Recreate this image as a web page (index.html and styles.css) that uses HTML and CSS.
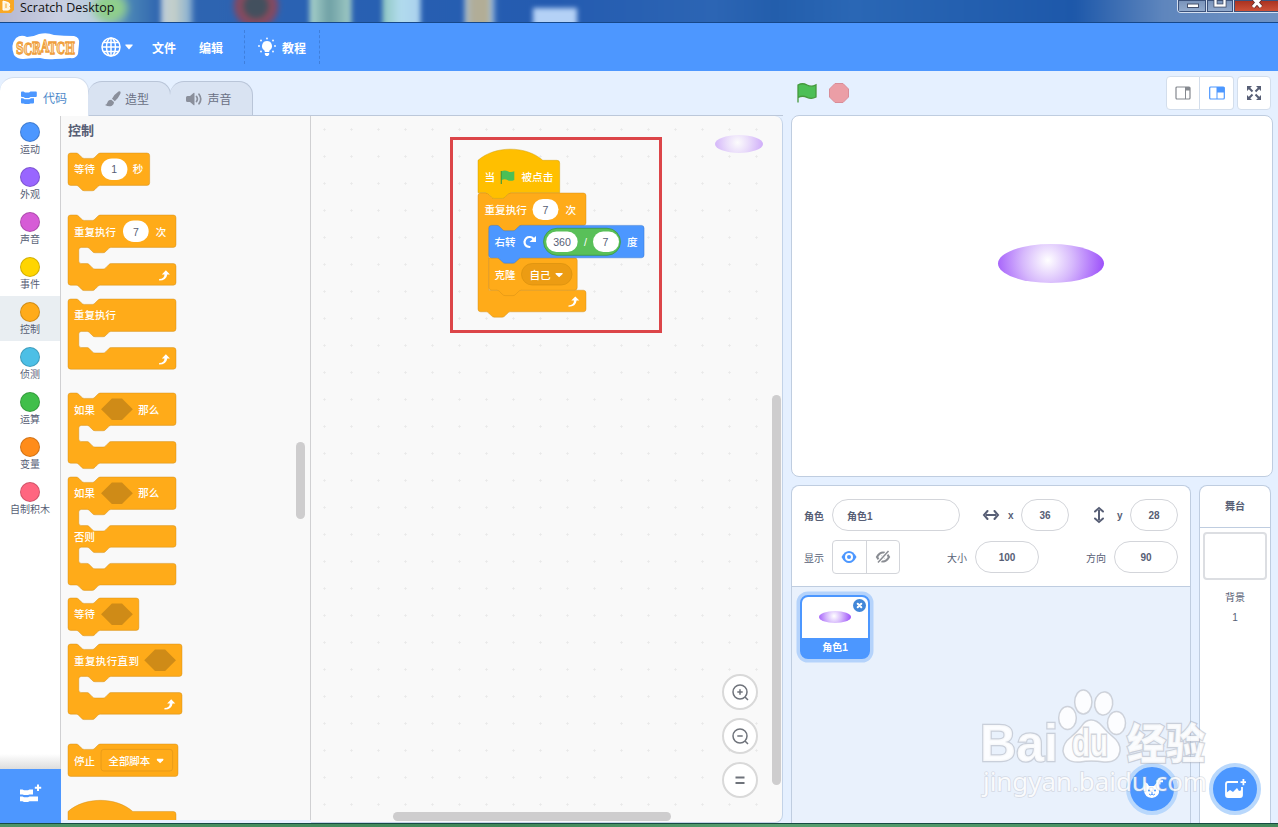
FILE: index.html
```html
<!DOCTYPE html>
<html lang="zh-CN">
  <head>
    <meta charset="UTF-8" />
    <title>Scratch Desktop</title>
    <link rel="stylesheet" href="styles.css">
  </head>
  <body>
    <header class="titlebar">
      <svg class="app-icon" width="15" height="16" viewBox="0 0 15 16">
        <path d="M-2 0H14v11l-3 3H-2z" fill="#f9a825"/>
        <path d="M3 2l5 1.500q3 1 1 4 2 3-1 3.500L3 11z" fill="#fff3d6" stroke="#fff" stroke-width="1"/>
        <path d="M6 4.500v4.500" stroke="#f9a825" stroke-width="1"/>
      </svg>
      <span class="app-title">Scratch Desktop</span>
      <div class="window-buttons">
        <span class="win-btn"><svg width="28" height="12"><rect x="9.500" y="4" width="11" height="3.500" fill="#fff" stroke="#44506b"/></svg></span>
        <span class="win-btn"><svg width="26" height="12"><rect x="8.500" y="-1.500" width="9" height="7" fill="none" stroke="#44506b" stroke-width="4"/><rect x="8.500" y="-1.500" width="9" height="7" fill="none" stroke="#fff" stroke-width="2.300"/></svg></span>
        <span class="win-btn win-close"><svg width="46" height="12"><path d="M19-2l8 9M27-2l-8 9" stroke="#5c2a2a" stroke-width="4.500"/><path d="M19-2l8 9M27-2l-8 9" stroke="#fff" stroke-width="3"/></svg></span>
      </div>
    </header>

    <nav class="menu-bar">
      <svg class="logo" width="70" height="28" viewBox="0 0 70 28">
        <path d="M5 5Q10 1 16 4 22 4 28 1 36-1 43 2 53 3 63 3q6 1 5 8l-1 10q-2 5-8 4-8 1-15 1-8 1-15-1-8 0-17 1-6 0-9-4Q-1 12 5 5z" fill="#fff"/>
        <text x="5" y="20.500" textLength="59" lengthAdjust="spacingAndGlyphs">S<tspan dy="1">C</tspan><tspan dy="-.500">R</tspan><tspan dy="-2">A</tspan><tspan dy="1.500">T</tspan><tspan dy=".500">C</tspan><tspan dy="-.500">H</tspan></text>
      </svg>
      <div class="menu-item language">
        <svg width="20" height="20" viewBox="0 0 20 20" fill="none" stroke="#fff" stroke-width="1.500">
          <circle cx="10" cy="10" r="9"/>
          <ellipse cx="10" cy="10" rx="4.500" ry="9"/>
          <path d="M10 1v18M1 10h18M2.500 5.500h15M2.500 14.500h15"/>
        </svg>
        <svg width="8" height="6" viewBox="0 0 8 6"><path d="M.5.500h7Q8 1 7.500 1.500L4 5.500.500 1.500Q0 1 .5.500z" fill="#fff"/></svg>
      </div>
      <span class="menu-item file">文件</span>
      <span class="menu-item edit">编辑</span>
      <div class="menu-item tutorials">
        <svg width="18" height="20" viewBox="0 0 18 20" fill="#fff">
          <path d="M9 4a5 5 0 0 1 3 9q-.8.700-.8 2H6.800q0-1.300-.8-2a5 5 0 0 1 3-9zM6.800 16h4.400v1.500L10 19H8l-1.200-1.500z"/>
          <g><circle cx="9" cy="1.500" r=".9"/><circle cx="3" cy="3.500" r=".9"/><circle cx="15" cy="3.500" r=".9"/><circle cx="1" cy="9" r=".9"/><circle cx="17" cy="9" r=".9"/><circle cx="3" cy="14.500" r=".9"/><circle cx="15" cy="14.500" r=".9"/></g>
        </svg>
        <span>教程</span>
      </div>
    </nav>

    <main class="workspace-area">
      <section class="editor">
        <div class="tabs">
          <div class="tab active">
            <svg width="16" height="13" viewBox="0 0 16 13" fill="#4c97ff">
              <path d="M0 1.500Q0 .5 1 .5h1.500l1.500 1h4l1.500-1H15q.8 0 .8 1V5q0 1-1 1H9.500L8 7H4L2.500 6H1Q0 6 0 5z"/>
              <path d="M0 7.200h2l1.500 1h5l1.500-1h3v4.300q0 1-1 1H9.500l-1.500.500H4l-1.500-.500H1q-1 0-1-1z"/>
            </svg>
            <span>代码</span>
          </div>
          <div class="tab">
            <svg width="16" height="16" viewBox="0 0 16 16" fill="#8a8f9b">
              <path d="M15.200.500q.8.700 0 2.500-1.700 4-5.400 7.200L7 7.800Q9.800 3 13.500.600q1-.6 1.700-.1zM6.300 8.700l2.600 2.200q.4 2.600-2 3.800-3 1.400-6.900-.7 1.800-.3 2.300-2.200.8-3 4-3.100z"/>
            </svg>
            <span>造型</span>
          </div>
          <div class="tab">
            <svg width="17" height="14" viewBox="0 0 17 14" fill="#8a8f9b">
              <path d="M1.500 4H4l3.500-3q1-.7 1 .6v10.800q0 1.300-1 .6L4 10H1.500Q0 10 0 8.500v-3Q0 4 1.500 4z"/>
              <path d="M10.500 4.500q1.800 2.500 0 5M13 2.200q3.500 4.800 0 9.600" fill="none" stroke="#8a8f9b" stroke-width="1.700" stroke-linecap="round"/>
            </svg>
            <span>声音</span>
          </div>
        </div>

        <div class="editor-body">
          <div class="sidebar">
            <ul class="categories">
              <li><i class="dot motion"></i>运动</li>
              <li><i class="dot looks"></i>外观</li>
              <li><i class="dot sound"></i>声音</li>
              <li><i class="dot events"></i>事件</li>
              <li class="selected"><i class="dot control"></i>控制</li>
              <li><i class="dot sensing"></i>侦测</li>
              <li><i class="dot operators"></i>运算</li>
              <li><i class="dot variables"></i>变量</li>
              <li><i class="dot my-blocks"></i>自制积木</li>
            </ul>
            <div class="extension-button">
              <svg width="22" height="19" viewBox="0 0 22 19" fill="#fff">
                <path d="M0 5.500h2.500l1.500.800h4l1.500-.8H13v4.900H9.500L8 11H4l-1.500-.6H0zM0 12.400h2.500l1.500.8h4l1.500-.8H18v4.800H9.500l-1.500.7H4l-1.500-.7H0zM17 .5h2v2.200h2.200v2H19V7h-2V4.700h-2.200v-2H17z"/>
              </svg>
            </div>
          </div>

          <div class="palette">
            <h2>控制</h2>
            <!-- wait -->
            <svg class="block gap-l" width="81.700" height="32.400" viewBox="0 0 121 48">
              <path class="shape" d="M0 4a4 4 0 0 1 4-4h8c2 0 3 1 4 2l4 4c1 1 2 2 4 2h12c2 0 3-1 4-2l4-4c1-1 2-2 4-2H117a4 4 0 0 1 4 4v40a4 4 0 0 1-4 4H48c-2 0-3 1-4 2l-4 4c-1 1-2 2-4 2h-12c-2 0-3-1-4-2l-4-4c-1-1-2-2-4-2H4a4 4 0 0 1-4-4z"/>
              <text x="9" y="30">等待</text>
              <rect class="field" x="49" y="8" width="39" height="32" rx="16"/>
              <text class="num" x="68.500" y="30">1</text>
              <text x="96" y="30">秒</text>
            </svg>
            <!-- repeat -->
            <svg class="block" width="108" height="70.200" viewBox="0 0 160 104">
              <path class="shape" d="M0 4a4 4 0 0 1 4-4h8c2 0 3 1 4 2l4 4c1 1 2 2 4 2h12c2 0 3-1 4-2l4-4c1-1 2-2 4-2H156a4 4 0 0 1 4 4v40a4 4 0 0 1-4 4H64c-2 0-3 1-4 2l-4 4c-1 1-2 2-4 2h-12c-2 0-3-1-4-2l-4-4c-1-1-2-2-4-2h-8a4 4 0 0 0-4 4v16a4 4 0 0 0 4 4h8c2 0 3 1 4 2l4 4c1 1 2 2 4 2h12c2 0 3-1 4-2l4-4c1-1 2-2 4-2H156a4 4 0 0 1 4 4v24a4 4 0 0 1-4 4H48c-2 0-3 1-4 2l-4 4c-1 1-2 2-4 2h-12c-2 0-3-1-4-2l-4-4c-1-1-2-2-4-2H4a4 4 0 0 1-4-4z"/>
              <text x="9" y="31">重复执行</text>
              <rect class="field" x="81.500" y="8" width="38" height="32" rx="16"/>
              <text class="num" x="100.500" y="31">7</text>
              <text x="130" y="31">次</text>
              <path class="loop" d="M135 95q8-1 8-7h-4l6-6 6 6h-4q-1 9-12 9z"/>
            </svg>
            <!-- forever -->
            <svg class="block gap-m" width="108" height="70.200" viewBox="0 0 160 104">
              <path class="shape" d="M0 4a4 4 0 0 1 4-4h8c2 0 3 1 4 2l4 4c1 1 2 2 4 2h12c2 0 3-1 4-2l4-4c1-1 2-2 4-2H156a4 4 0 0 1 4 4v40a4 4 0 0 1-4 4H64c-2 0-3 1-4 2l-4 4c-1 1-2 2-4 2h-12c-2 0-3-1-4-2l-4-4c-1-1-2-2-4-2h-8a4 4 0 0 0-4 4v16a4 4 0 0 0 4 4h8c2 0 3 1 4 2l4 4c1 1 2 2 4 2h12c2 0 3-1 4-2l4-4c1-1 2-2 4-2H156a4 4 0 0 1 4 4v24a4 4 0 0 1-4 4H4a4 4 0 0 1-4-4z"/>
              <text x="9" y="30">重复执行</text>
              <path class="loop" d="M135 95q8-1 8-7h-4l6-6 6 6h-4q-1 9-12 9z"/>
            </svg>
            <!-- if -->
            <svg class="block" width="108" height="70.200" viewBox="0 0 160 104">
              <path class="shape" d="M0 4a4 4 0 0 1 4-4h8c2 0 3 1 4 2l4 4c1 1 2 2 4 2h12c2 0 3-1 4-2l4-4c1-1 2-2 4-2H156a4 4 0 0 1 4 4v40a4 4 0 0 1-4 4H64c-2 0-3 1-4 2l-4 4c-1 1-2 2-4 2h-12c-2 0-3-1-4-2l-4-4c-1-1-2-2-4-2h-8a4 4 0 0 0-4 4v16a4 4 0 0 0 4 4h8c2 0 3 1 4 2l4 4c1 1 2 2 4 2h12c2 0 3-1 4-2l4-4c1-1 2-2 4-2H156a4 4 0 0 1 4 4v24a4 4 0 0 1-4 4H48c-2 0-3 1-4 2l-4 4c-1 1-2 2-4 2h-12c-2 0-3-1-4-2l-4-4c-1-1-2-2-4-2H4a4 4 0 0 1-4-4z"/>
              <text x="9" y="31">如果</text>
              <path class="slot" d="M49 24l16-16h15l16 16-16 16H65z"/>
              <text x="104" y="31">那么</text>
            </svg>
            <!-- if / else -->
            <svg class="block" width="108" height="108" viewBox="0 0 160 160">
              <path class="shape" d="M0 4a4 4 0 0 1 4-4h8c2 0 3 1 4 2l4 4c1 1 2 2 4 2h12c2 0 3-1 4-2l4-4c1-1 2-2 4-2H156a4 4 0 0 1 4 4v40a4 4 0 0 1-4 4H64c-2 0-3 1-4 2l-4 4c-1 1-2 2-4 2h-12c-2 0-3-1-4-2l-4-4c-1-1-2-2-4-2h-8a4 4 0 0 0-4 4v16a4 4 0 0 0 4 4h8c2 0 3 1 4 2l4 4c1 1 2 2 4 2h12c2 0 3-1 4-2l4-4c1-1 2-2 4-2H156a4 4 0 0 1 4 4v24a4 4 0 0 1-4 4H64c-2 0-3 1-4 2l-4 4c-1 1-2 2-4 2h-12c-2 0-3-1-4-2l-4-4c-1-1-2-2-4-2h-8a4 4 0 0 0-4 4v16a4 4 0 0 0 4 4h8c2 0 3 1 4 2l4 4c1 1 2 2 4 2h12c2 0 3-1 4-2l4-4c1-1 2-2 4-2H156a4 4 0 0 1 4 4v24a4 4 0 0 1-4 4H48c-2 0-3 1-4 2l-4 4c-1 1-2 2-4 2h-12c-2 0-3-1-4-2l-4-4c-1-1-2-2-4-2H4a4 4 0 0 1-4-4z"/>
              <text x="9" y="30">如果</text>
              <path class="slot" d="M49 24l16-16h15l16 16-16 16H65z"/>
              <text x="104" y="30">那么</text>
              <text x="9" y="95">否则</text>
            </svg>
            <!-- wait until -->
            <svg class="block" width="70.900" height="32.400" viewBox="0 0 105 48">
              <path class="shape" d="M0 4a4 4 0 0 1 4-4h8c2 0 3 1 4 2l4 4c1 1 2 2 4 2h12c2 0 3-1 4-2l4-4c1-1 2-2 4-2H101a4 4 0 0 1 4 4v40a4 4 0 0 1-4 4H48c-2 0-3 1-4 2l-4 4c-1 1-2 2-4 2h-12c-2 0-3-1-4-2l-4-4c-1-1-2-2-4-2H4a4 4 0 0 1-4-4z"/>
              <text x="9" y="30">等待</text>
              <path class="slot" d="M49 24l16-16h15l16 16-16 16H65z"/>
            </svg>
            <!-- repeat until -->
            <svg class="block gap-l" width="114" height="70.200" viewBox="0 0 169 104">
              <path class="shape" d="M0 4a4 4 0 0 1 4-4h8c2 0 3 1 4 2l4 4c1 1 2 2 4 2h12c2 0 3-1 4-2l4-4c1-1 2-2 4-2H165a4 4 0 0 1 4 4v40a4 4 0 0 1-4 4H64c-2 0-3 1-4 2l-4 4c-1 1-2 2-4 2h-12c-2 0-3-1-4-2l-4-4c-1-1-2-2-4-2h-8a4 4 0 0 0-4 4v16a4 4 0 0 0 4 4h8c2 0 3 1 4 2l4 4c1 1 2 2 4 2h12c2 0 3-1 4-2l4-4c1-1 2-2 4-2H165a4 4 0 0 1 4 4v24a4 4 0 0 1-4 4H48c-2 0-3 1-4 2l-4 4c-1 1-2 2-4 2h-12c-2 0-3-1-4-2l-4-4c-1-1-2-2-4-2H4a4 4 0 0 1-4-4z"/>
              <text x="9" y="31" textLength="96">重复执行直到</text>
              <path class="slot" d="M113 24l16-16h15l16 16-16 16h-15z"/>
              <path class="loop" d="M143 95q8-1 8-7h-4l6-6 6 6h-4q-1 9-12 9z"/>
            </svg>
            <!-- stop -->
            <svg class="block gap-m" width="110" height="32.400" viewBox="0 0 163 48">
              <path class="shape" d="M0 4a4 4 0 0 1 4-4h8c2 0 3 1 4 2l4 4c1 1 2 2 4 2h12c2 0 3-1 4-2l4-4c1-1 2-2 4-2H159a4 4 0 0 1 4 4v40a4 4 0 0 1-4 4H4a4 4 0 0 1-4-4z"/>
              <text x="9" y="31">停止</text>
              <rect class="dropdown" x="49" y="8" width="106" height="32" rx="4"/>
              <text x="60" y="31">全部脚本</text>
              <path class="caret" d="M132 22h9q1 1 0 2l-4.500 4.500-4.500-4.500q-1-1 0-2z"/>
            </svg>
            <!-- when I start as a clone -->
            <svg class="block" width="108" height="32.400" viewBox="0 0 160 48">
              <path class="shape" d="M0 17C25-5 71-5 96 17H156a4 4 0 0 1 4 4V60H0z"/>
            </svg>
            <div class="scrollbar palette-scroll"></div>
          </div>

          <div class="canvas">
            <svg class="script" width="212" height="200" viewBox="450 135 212 200">
              <g transform="translate(478 160.300) scale(.675)">
                <path class="shape events" d="M0 0C25-22 71-22 96 0H117a4 4 0 0 1 4 4v44H0z"/>
              </g>
              <g transform="translate(478 193) scale(.675)">
                <path class="shape" d="M0 4a4 4 0 0 1 4-4h8c2 0 3 1 4 2l4 4c1 1 2 2 4 2h12c2 0 3-1 4-2l4-4c1-1 2-2 4-2H156a4 4 0 0 1 4 4v40a4 4 0 0 1-4 4H64v10H16v86H156a4 4 0 0 1 4 4v24a4 4 0 0 1-4 4H48c-2 0-3 1-4 2l-4 4c-1 1-2 2-4 2h-12c-2 0-3-1-4-2l-4-4c-1-1-2-2-4-2H4a4 4 0 0 1-4-4z"/>
                <path class="shape events" d="M12 0c2 0 3 1 4 2l4 4c1 1 2 2 4 2h12c2 0 3-1 4-2l4-4c1-1 2-2 4-2" />
                <rect class="events-patch" x="12" y="-3" width="36" height="3"/>
              </g>
              <g transform="translate(488.800 257.800) scale(.675)">
                <path class="shape" d="M0 0H127a4 4 0 0 1 4 4V44a4 4 0 0 1-4 4H48c-2 0-3 1-4 2l-4 4c-1 1-2 2-4 2h-12c-2 0-3-1-4-2l-4-4c-1-1-2-2-4-2H4a4 4 0 0 1-4-4z"/>
              </g>
              <g transform="translate(488.800 225.400) scale(.675)">
                <path class="shape motion" d="M0 4a4 4 0 0 1 4-4h8c2 0 3 1 4 2l4 4c1 1 2 2 4 2h12c2 0 3-1 4-2l4-4c1-1 2-2 4-2H226a4 4 0 0 1 4 4v40a4 4 0 0 1-4 4H48c-2 0-3 1-4 2l-4 4c-1 1-2 2-4 2h-12c-2 0-3-1-4-2l-4-4c-1-1-2-2-4-2H4a4 4 0 0 1-4-4z"/>
              </g>
              <g class="labels">
                <text x="484.500" y="181">当</text>
                <path d="M501.300 171.500q3.500-2 6.500-.2 3 1.400 6.500 0v8.700q-3.500 1.600-6.500.2-3-1.800-6.500 0v4" fill="#4cbf56"/>
                <path d="M501.300 184v-13" stroke="#45993d" stroke-width="1.200"/>
                <text x="521.500" y="181">被点击</text>
                <text x="484.500" y="213.500">重复执行</text>
                <rect class="field" x="532.500" y="199" width="26" height="21" rx="10.500"/>
                <text class="num" x="545.500" y="213.500">7</text>
                <text x="565.500" y="213.500">次</text>
                <text x="494.500" y="246">右转</text>
                <path d="M529.500 247q-5-.5-5-5.300 1-5 5.500-4.700 2 .1 3.300 1.700" fill="none" stroke="#fff" stroke-width="2.200" stroke-linecap="round"/>
                <path d="M536 236v6h-6.500z" fill="#fff"/>
                <rect class="operator" x="543.500" y="228.300" width="77" height="27" rx="13.500"/>
                <rect class="field" x="546.200" y="231.500" width="31.500" height="20.500" rx="10.250"/>
                <text class="num" x="562" y="246">360</text>
                <text x="584" y="245.500">/</text>
                <rect class="field" x="593" y="231.500" width="26" height="20.500" rx="10.250"/>
                <text class="num" x="605.500" y="246">7</text>
                <text x="627" y="246">度</text>
                <text x="494.500" y="278.500">克隆</text>
                <rect class="menu-field" x="521.500" y="263.500" width="50.500" height="21.500" rx="10.750"/>
                <text x="529.500" y="278.500">自己</text>
                <path class="caret" d="M555.800 273h6.600q.7.600 0 1.200l-3.300 3-3.300-3q-.7-.6 0-1.200z"/>
                <path class="loop" d="M568.500 305.500q5.500-.7 5.500-5h-2.700l4-4 4 4h-2.700q-.6 6.200-8.100 6.200z"/>
              </g>
              <rect x="451.500" y="138.500" width="209" height="193" fill="none" stroke="#dc4549" stroke-width="3"/>
            </svg>
            <i class="disc canvas-disc"></i>
            <div class="zoom-controls">
              <span><svg width="20" height="20" viewBox="0 0 20 20"><circle cx="10" cy="10" r="7"/><path d="M15 15l3 3M7.300 10h5.400M10 7.300v5.400"/></svg></span>
              <span><svg width="20" height="20" viewBox="0 0 20 20"><circle cx="10" cy="10" r="7"/><path d="M15 15l3 3M7.300 10h5.400"/></svg></span>
              <span><svg width="20" height="20" viewBox="0 0 20 20"><path d="M5.500 7.500h9M5.500 13h9" stroke-width="2"/></svg></span>
            </div>
            <div class="scrollbar scroll-v"></div>
            <div class="scrollbar scroll-h"></div>
          </div>
        </div>
      </section>

      <section class="right-side">
        <div class="stage-header">
          <svg width="20" height="20" viewBox="0 0 20 20"><path d="M1 19.500V2q4.500-2.500 9 0t9-.2V14q-4.500 2.500-9 .3T1 14.500" fill="#4cbf56" stroke="#45993d" stroke-width="1.300"/></svg>
          <svg width="20" height="20" viewBox="0 0 20 20"><path d="M6 .500h8l5.500 5.500v8L14 19.500H6L.500 14V6z" fill="#eb9ea6" stroke="#d98d98"/></svg>
          <div class="stage-buttons">
            <span class="stage-btn"><svg width="16" height="14" viewBox="0 0 16 14"><rect x="1" y="1" width="14" height="12" rx="1" fill="none" stroke="#85898f" stroke-width="1.200"/><path d="M10.500 1v12" stroke="#85898f"/><path d="M10.500 1H15v3.500h-4.500z" fill="#85898f"/></svg></span>
            <span class="stage-btn"><svg width="16" height="14" viewBox="0 0 16 14"><rect x=".7" y="1" width="14.600" height="12" rx="1" fill="#fff" stroke="#4c97ff" stroke-width="1.200"/><path d="M8 1h7.300v5.500H8z" fill="#4c97ff"/><path d="M8 1v12" stroke="#4c97ff"/></svg></span>
          </div>
          <span class="stage-btn full"><svg width="16" height="16" viewBox="0 0 16 16" fill="none" stroke="#575e75" stroke-width="2"><path d="M2.500 2.500l4 4M13.500 2.500l-4 4M2.500 13.500l4-4M13.500 13.500l-4-4"/><path d="M1 1h5L1 6zM15 1v5l-5-5zM1 15v-5l5 5zM15 15h-5l5-5z" fill="#575e75" stroke="none"/></svg></span>
        </div>
        <div class="stage"><i class="disc stage-disc"></i></div>

        <div class="targets">
          <div class="sprite-panel">
            <div class="sprite-info">
              <div class="info-row">
                <b class="label">角色</b>
                <span class="input name">角色1</span>
                <svg class="arrow-x" width="18" height="10" viewBox="0 0 18 10"><path d="M4 5h10" stroke="#575e75" stroke-width="2"/><path d="M5.500 1L2 5l3.500 4M12.500 1L16 5l-3.500 4" fill="none" stroke="#575e75" stroke-width="2" stroke-linecap="round"/></svg>
                <span class="axis">x</span>
                <span class="input small">36</span>
                <svg class="arrow-y" width="10" height="18" viewBox="0 0 10 18"><path d="M5 4v10" stroke="#575e75" stroke-width="2"/><path d="M1 5.500L5 2l4 3.500M1 12.500L5 16l4-3.500" fill="none" stroke="#575e75" stroke-width="2" stroke-linecap="round"/></svg>
                <span class="axis">y</span>
                <span class="input small">28</span>
              </div>
              <div class="info-row">
                <span class="label">显示</span>
                <div class="toggle">
                  <span><svg width="16" height="14" viewBox="0 0 16 14"><path d="M.5 7q3-6 7.500-6t7.500 6q-3 6-7.500 6T.5 7z" fill="#4c97ff" /><circle cx="8" cy="7" r="4" fill="#fff"/><circle cx="8" cy="7" r="2" fill="#4c97ff"/></svg></span>
                  <span><svg width="16" height="14" viewBox="0 0 16 14"><path d="M2 7q2.500-4.500 6-4.500T14 7q-2.500 4.500-6 4.500T2 7z" fill="none" stroke="#8a8d93" stroke-width="2.200"/><circle cx="8" cy="7" r="2" fill="#8a8d93"/><path d="M3 12.500L13.500 1" stroke="#fff" stroke-width="3.500"/><path d="M3 12.500L13.500 1" stroke="#8a8d93" stroke-width="1.500"/></svg></span>
                </div>
                <span class="label size">大小</span>
                <span class="input mid">100</span>
                <span class="label direction">方向</span>
                <span class="input mid">90</span>
              </div>
            </div>
            <div class="sprite-list">
              <div class="sprite">
                <div class="thumb"><i class="disc thumb-disc"></i></div>
                <span>角色1</span>
                <svg class="delete" width="13" height="13" viewBox="0 0 13 13"><circle cx="6.500" cy="6.500" r="6.500" fill="#4287d8"/><path d="M4.700 4.700l3.600 3.600M8.300 4.700L4.700 8.300" stroke="#fff" stroke-width="2" stroke-linecap="round"/></svg>
              </div>
            </div>
            <div class="add-button add-sprite">
              <svg width="22" height="22" viewBox="0 0 22 22" fill="#fff"><path d="M4 4q3 1 4 4h5l4-5q2 4 1 8 1 8-7 9-8-1-8-8z"/><path d="M17.500 0h2v2.300H22v2h-2.500V6.500h-2V4.300h-2v-2h2z"/><circle cx="8" cy="12.500" r="1" fill="#4c97ff"/><circle cx="14" cy="12.500" r="1" fill="#4c97ff"/><path d="M8 16q2 2 3 0 1 2 3 0M11 14v2" fill="none" stroke="#4c97ff"/></svg>
            </div>
          </div>

          <div class="stage-selector">
            <b>舞台</b>
            <div class="backdrop"></div>
            <span class="backdrop-label">背景</span>
            <span class="backdrop-count">1</span>
            <div class="add-button add-backdrop">
              <svg width="22" height="20" viewBox="0 0 22 20"><path d="M14 3H4Q2 3 2 5v11q0 2 2 2h12q2 0 2-2V8" fill="none" stroke="#fff" stroke-width="1.800"/><path d="M2 14l4-3 3 2 4-4 2 3 3-1v5q0 2-2 2H4q-2 0-2-2zM18.500 0h1.800v2.300h2v1.800h-2v2.200h-1.800V4.100h-2V2.300h2z" fill="#fff"/></svg>
            </div>
          </div>
        </div>
      </section>
    </main>
    <footer class="desktop-edge"></footer>

    <svg class="watermark" width="240" height="120" viewBox="975 683 240 120">
      <g class="mark">
        <ellipse cx="1067.500" cy="718" rx="8.800" ry="11.500"/>
        <ellipse cx="1083.300" cy="702" rx="8.600" ry="12"/>
        <ellipse cx="1103.700" cy="703.500" rx="9" ry="11.500" transform="rotate(8 1103.700 703.500)"/>
        <ellipse cx="1116.500" cy="723" rx="9" ry="11.500"/>
        <path d="M1091 720q6 0 11 6 5 6 10 10 9 7 8 15-2 12-16 11-13-2-24 0-15 1-17-11 0-8 8-14 6-5 10-10 4-7 10-7z"/>
        <text class="bai" x="980" y="761" textLength="78" lengthAdjust="spacingAndGlyphs">Bai</text>
        <text class="jingyan" x="1127" y="759" textLength="78" lengthAdjust="spacingAndGlyphs">经验</text>
        <text class="du" x="1072" y="756" textLength="36" lengthAdjust="spacingAndGlyphs">du</text>
        <text class="url" x="983" y="791" textLength="224" lengthAdjust="spacingAndGlyphs">jingyan.baidu.com</text>
      </g>
    </svg>
  </body>
</html>
```
FILE: styles.css
```css
* {
  box-sizing: border-box;
}

body {
  margin: 0;
  width: 1278px;
  height: 827px;
  overflow: hidden;
  display: flex;
  flex-direction: column;
  position: relative;
  font-family: "Liberation Sans", "Noto Sans CJK SC", sans-serif;
  font-size: 10px;
  color: #575e75;
  background: #e5f0ff;
}

svg {
  display: block;
  flex: none;
}

/* window frame */
.titlebar {
  height: 23px;
  flex: none;
  display: flex;
  position: relative;
  overflow: hidden;
  z-index: 0;
  border-bottom: 1px solid #16488a;
  box-shadow: inset 0 -1px #a6d0f5;
}

/* desktop icons showing through the glass */
.titlebar::before {
  content: "";
  position: absolute;
  inset: -6px -6px -6px -6px;
  z-index: -1;
  filter: blur(2.500px);
  background:
    linear-gradient(#b4d1f6, #b4d1f6) 539px 14px / 44px 30px no-repeat,
    radial-gradient(ellipse 22px 18px at 116px 14px, #8fce8c 50%, transparent),
    radial-gradient(circle at 262px 12px, #43505e 10px, #8b4a5b 15px, #7a4a6a 20px, transparent 25px),
    linear-gradient(90deg, transparent 166px, #bccbd8 168px, #c4cfc8 180px, #8db2d0 195px, transparent 201px,
      transparent 315px, #a8d2cb 316px, #6fa0a5 335px, #9fcac5 357px, transparent 358px,
      transparent 388px, #8fc7c0 389px, #b1dbed 406px, #abd1ed 426px, transparent 427px,
      transparent 470px, #a9bfd2 471px, #b0ad99 478px, #b3ad94 494px, #a6c3df 497px, transparent 503px),
    linear-gradient(90deg, #b3b5cf, #c9cfe2 66px, #b7cddd 105px, #4b86b6 135px, #2f65b0 165px,
      #2a62b3 300px, #245bb0 560px, #2c65b4 720px, #235eac 780px, #2a67b5 860px, #1d58aa 1080px, #5f86bd 1170px, #6d91c2 1278px);
}

.app-icon {
  margin-top: -1px;
}

.app-title {
  font: 12.500px/16px "Open Sans", sans-serif;
  color: #111;
  margin-left: 5px;
  flex: 1;
}

.window-buttons {
  display: flex;
  height: 13px;
  border: 1px solid #d5e0f0;
  border-top: 0;
  border-right: 0;
  border-radius: 0 0 0 4px;
  overflow: hidden;
  width: 101px;
}

.win-btn {
  background: linear-gradient(#7892b9, #93abcd);
  border-right: 1px solid #d5e0f0;
  box-shadow: inset 0 0 0 1px #3b527c;
}

.win-close {
  background: linear-gradient(#a7301e, #d0543a);
  border-right: 0;
}

/* menu */
.menu-bar {
  height: 48px;
  flex: none;
  display: flex;
  align-items: center;
  background: #4d97ff;
  color: #fff;
  font-size: 12px;
  font-weight: bold;
}

.logo {
  margin: 0 20px 0 11px;
  overflow: visible;
}

.logo text {
  font: bold 16.500px "DejaVu Serif", serif;
  fill: #fbd9a8;
  stroke: #ef9f3c;
  stroke-width: 1.300px;
}

.menu-item {
  display: flex;
  align-items: center;
}

.language {
  gap: 4px;
  width: 51px;
}

.file {
  width: 47px;
}

.edit {
  width: 45px;
}

.tutorials {
  height: 34px;
  width: 76px;
  padding-left: 13px;
  gap: 6px;
  border-left: 1px dashed #3f7fdc;
  border-right: 1px dashed #3f7fdc;
}

/* editor */
.workspace-area {
  flex: 1;
  min-height: 0;
  display: flex;
}

.editor {
  width: 783px;
  display: flex;
  flex-direction: column;
}

.tabs {
  height: 45px;
  flex: none;
  display: flex;
  align-items: flex-end;
  border-bottom: 1px solid #bcc8da;
}

.tab {
  width: 83px;
  height: 34px;
  margin-right: -1px;
  display: flex;
  align-items: center;
  justify-content: center;
  gap: 4px;
  padding-right: 4px;
  font-size: 12px;
  color: #6a7084;
  background: #d9e3f2;
  border: 1px solid #b9c5d8;
  border-bottom: 0;
  border-left: 0;
  border-radius: 14px 14px 0 0;
}

.tab.active {
  width: 89px;
  height: 39px;
  margin-bottom: -1px;
  padding: 0;
  gap: 6px;
  color: #4c87c9;
  background: #fff;
  border-color: #d3deee;
}

.editor-body {
  flex: 1;
  min-height: 0;
  display: flex;
}

.sidebar {
  width: 61px;
  display: flex;
  flex-direction: column;
  background: #fff;
  border-right: 1px solid #d0d0d2;
}

.categories {
  flex: 1;
  margin: 0;
  padding: 0;
  list-style: none;
  background: linear-gradient(transparent 638px, #ddd);
}

.categories li {
  height: 45px;
  padding-top: 6px;
  display: flex;
  flex-direction: column;
  align-items: center;
  line-height: 15px;
  white-space: nowrap;
}

.categories li.selected {
  background: #e9eef2;
}

.dot {
  width: 20px;
  height: 20px;
  flex: none;
  border-radius: 50%;
  border: 1px solid rgba(0, 0, 0, .18);
}

.dot.motion { background: #4c97ff; }
.dot.looks { background: #9966ff; }
.dot.sound { background: #d65cd6; }
.dot.events { background: #ffd500; }
.dot.control { background: #ffab19; }
.dot.sensing { background: #4cbfe6; }
.dot.operators { background: #40bf4a; }
.dot.variables { background: #ff8c1a; }
.dot.my-blocks { background: #ff6680; }

.extension-button {
  height: 54px;
  width: 61px;
  flex: none;
  display: flex;
  align-items: center;
  padding: 0 0 5px 20px;
  background: #4d97ff;
}

.palette {
  width: 250px;
  height: 704px;
  padding-left: 7px;
  position: relative;
  overflow: hidden;
  background: #f9f9f9;
  border-right: 1px solid #d0d0d2;
  display: flex;
  flex-direction: column;
  align-items: flex-start;
}

.palette h2 {
  margin: 6px 0 13px 0;
  font-size: 13px;
  line-height: 18px;
}

/* code blocks */
.block {
  overflow: visible;
  margin-bottom: 13.300px;
}

.block.gap-m {
  margin-bottom: 24.200px;
}

.block.gap-l {
  margin-bottom: 29.900px;
}

.shape {
  fill: #ffab19;
  stroke: #cf8b17;
  stroke-opacity: .65;
  stroke-width: 1;
}

.shape.events {
  fill: #ffbf00;
  stroke: #cc9900;
}

.events-patch {
  fill: #ffbf00;
}

.shape.motion {
  fill: #4c97ff;
  stroke: #3373cc;
}

.block text {
  font-size: 15.500px;
  font-weight: 500;
  fill: #fff;
}

.labels text {
  font-size: 10.600px;
  font-weight: 500;
  fill: #fff;
}

.block .num,
.labels .num {
  fill: #575e75;
  text-anchor: middle;
  font-weight: normal;
}

.field {
  fill: #fff;
}

.slot {
  fill: #cf8b17;
}

.dropdown {
  fill: #ffab19;
  stroke: #e0951a;
}

.menu-field {
  fill: #ec9c13;
  stroke: #d9900f;
  stroke-width: .7;
}

.operator {
  fill: #59c059;
  stroke: #389438;
  stroke-width: .7;
}

.caret,
.loop {
  fill: #fff;
}

.scrollbar {
  position: absolute;
  background: #cecdce;
  border-radius: 5px;
}

.palette-scroll {
  left: 235px;
  top: 326px;
  width: 9px;
  height: 77px;
}

.canvas {
  flex: 1;
  position: relative;
  overflow: hidden;
  border-right: 1px solid #c3d3e8;
  border-bottom: 1px solid #c3d3e8;
  border-radius: 0 8px 8px 0;
  background: radial-gradient(circle at 13.500px 13.500px, #e9e9e9 .9px, transparent 1.300px) 0 0 / 27px 27px #f9f9f9;
}

.script {
  position: absolute;
  left: 139px;
  top: 19px;
}

.disc {
  display: block;
  border-radius: 50%;
  background: radial-gradient(circle farthest-side at 47% 42%, #fff, #d6b8fc 45%, #9f55fa 98%);
}

.canvas-disc {
  position: absolute;
  left: 404px;
  top: 19px;
  width: 48px;
  height: 18px;
  opacity: .45;
}

.zoom-controls {
  position: absolute;
  left: 411px;
  top: 558px;
  display: flex;
  flex-direction: column;
  gap: 8px;
}

.zoom-controls span {
  width: 36px;
  height: 36px;
  border: 2px solid #d9d9d9;
  border-radius: 50%;
  background: #fff;
  display: flex;
  align-items: center;
  justify-content: center;
}

.zoom-controls svg {
  fill: none;
  stroke: #6f737b;
  stroke-width: 1.500;
}

.scroll-v {
  left: 461px;
  top: 279px;
  width: 9px;
  height: 390px;
}

.scroll-h {
  left: 82px;
  top: 696px;
  width: 278px;
  height: 9px;
}

/* stage */
.right-side {
  flex: 1;
  padding: 0 5px 0 8px;
  display: flex;
  flex-direction: column;
}

.stage-header {
  height: 44px;
  flex: none;
  display: flex;
  align-items: center;
  padding: 0 2px 0 6px;
  gap: 12px;
}

.stage-buttons {
  display: flex;
  margin-left: auto;
  margin-right: -9px;
}

.stage-btn {
  width: 34px;
  height: 34px;
  display: flex;
  align-items: center;
  justify-content: center;
  background: #fff;
  border: 1px solid #d3deec;
  border-radius: 4px;
}

.stage-buttons .stage-btn:first-child {
  border-radius: 4px 0 0 4px;
}

.stage-buttons .stage-btn:last-child {
  border-radius: 0 4px 4px 0;
  border-left: 0;
}

.stage {
  height: 362px;
  width: 482px;
  flex: none;
  background: #fff;
  border: 1px solid #bfcde0;
  border-radius: 8px;
  padding: 128px 0 0 206px;
}

.stage-disc {
  width: 106px;
  height: 39px;
}

.targets {
  flex: 1;
  min-height: 0;
  margin-top: 8px;
  display: flex;
  gap: 8px;
}

.sprite-panel {
  width: 400px;
  position: relative;
  display: flex;
  flex-direction: column;
  border: 1px solid #bfcde0;
  border-bottom: 0;
  border-radius: 8px 8px 0 0;
  background: #e9f1fc;
}

.sprite-info {
  height: 101px;
  padding: 12px 12px 0;
  background: #fff;
  border-bottom: 1px solid #bfcde0;
  border-radius: 8px 8px 0 0;
}

.info-row {
  height: 34px;
  margin-bottom: 8px;
  display: flex;
  align-items: center;
}

.label {
  width: 28px;
}

.input {
  height: 32px;
  border: 1px solid #d3d5da;
  border-radius: 16px;
  display: flex;
  align-items: center;
  justify-content: center;
  font-weight: bold;
  white-space: nowrap;
}

.input.name {
  width: 128px;
  justify-content: flex-start;
  padding-left: 14px;
}

.input.small {
  width: 48px;
}

.input.mid {
  width: 64px;
}

.arrow-x {
  margin: 0 8px 0 22px;
}

.arrow-y {
  margin: 0 13px 0 25px;
}

.axis {
  width: 13px;
  font-weight: bold;
}

.toggle {
  display: flex;
  height: 34px;
  width: 68px;
  border: 1px solid #d3d5da;
  border-radius: 4px;
}

.toggle span {
  flex: 1;
  display: flex;
  align-items: center;
  justify-content: center;
}

.toggle span + span {
  border-left: 1px solid #d3d5da;
}

.size {
  margin-left: 47px;
}

.direction {
  margin-left: 47px;
}

.sprite-list {
  padding: 8px;
}

.sprite {
  position: relative;
  width: 70px;
  height: 64px;
  border: 2px solid #4c97ff;
  border-radius: 8px;
  background: #4c97ff;
  box-shadow: 0 0 0 3.500px #b5d3fb;
  color: #fff;
  font-weight: bold;
  text-align: center;
  line-height: 19px;
}

.sprite span {
  display: block;
}

.thumb {
  height: 41px;
  background: #fff;
  border-radius: 6px 6px 0 0;
  padding: 14px 0 0 17px;
}

.thumb-disc {
  width: 32px;
  height: 12px;
}

.delete {
  position: absolute;
  right: 2px;
  top: 2px;
}

.add-button {
  position: absolute;
  width: 52px;
  height: 52px;
  border: 4px solid #b9d8fc;
  border-radius: 50%;
  background: #4c97ff;
  display: flex;
  align-items: center;
  justify-content: center;
}

.add-sprite {
  right: 12px;
  bottom: 8px;
}

.stage-selector {
  width: 72px;
  position: relative;
  display: flex;
  flex-direction: column;
  align-items: center;
  background: #fff;
  border: 1px solid #bfcde0;
  border-bottom: 0;
  border-radius: 8px 8px 0 0;
}

.stage-selector b {
  align-self: stretch;
  height: 42px;
  flex: none;
  line-height: 42px;
  text-align: center;
  border-bottom: 1px solid #bfcde0;
}

.backdrop {
  width: 64px;
  height: 48px;
  flex: none;
  margin-top: 4px;
  border: 2px solid #dcdee2;
  border-radius: 4px;
}

.backdrop-label {
  margin-top: 10px;
  line-height: 15px;
}

.backdrop-count {
  margin-top: 6px;
  line-height: 14px;
}

.add-backdrop {
  right: 9px;
  bottom: 8px;
}

.desktop-edge {
  height: 4px;
  flex: none;
  background: linear-gradient(90deg, #4c9565, #3f8758 40%, #57a070 60%, #428a5b);
  border-top: 1px solid #174b42;
}

/* paw watermark over the sprite pane */
.watermark {
  position: absolute;
  left: 975px;
  top: 683px;
}

.mark {
  fill: #fff;
  fill-opacity: .85;
  stroke: #a9adb8;
  stroke-opacity: .5;
  stroke-width: 1.500;
}

.mark text {
  paint-order: stroke;
}

.mark .bai {
  font-size: 52px;
  font-weight: bold;
  stroke-width: 2.500;
}

.mark .jingyan {
  font-size: 42px;
  font-weight: 900;
  stroke-width: 2.500;
}

.mark .du {
  font-size: 38px;
  font-weight: bold;
  stroke-width: 3;
}

.mark .url {
  font: 26px "Noto Sans", sans-serif;
  stroke-width: 1.500;
  stroke-opacity: .35;
}
```
